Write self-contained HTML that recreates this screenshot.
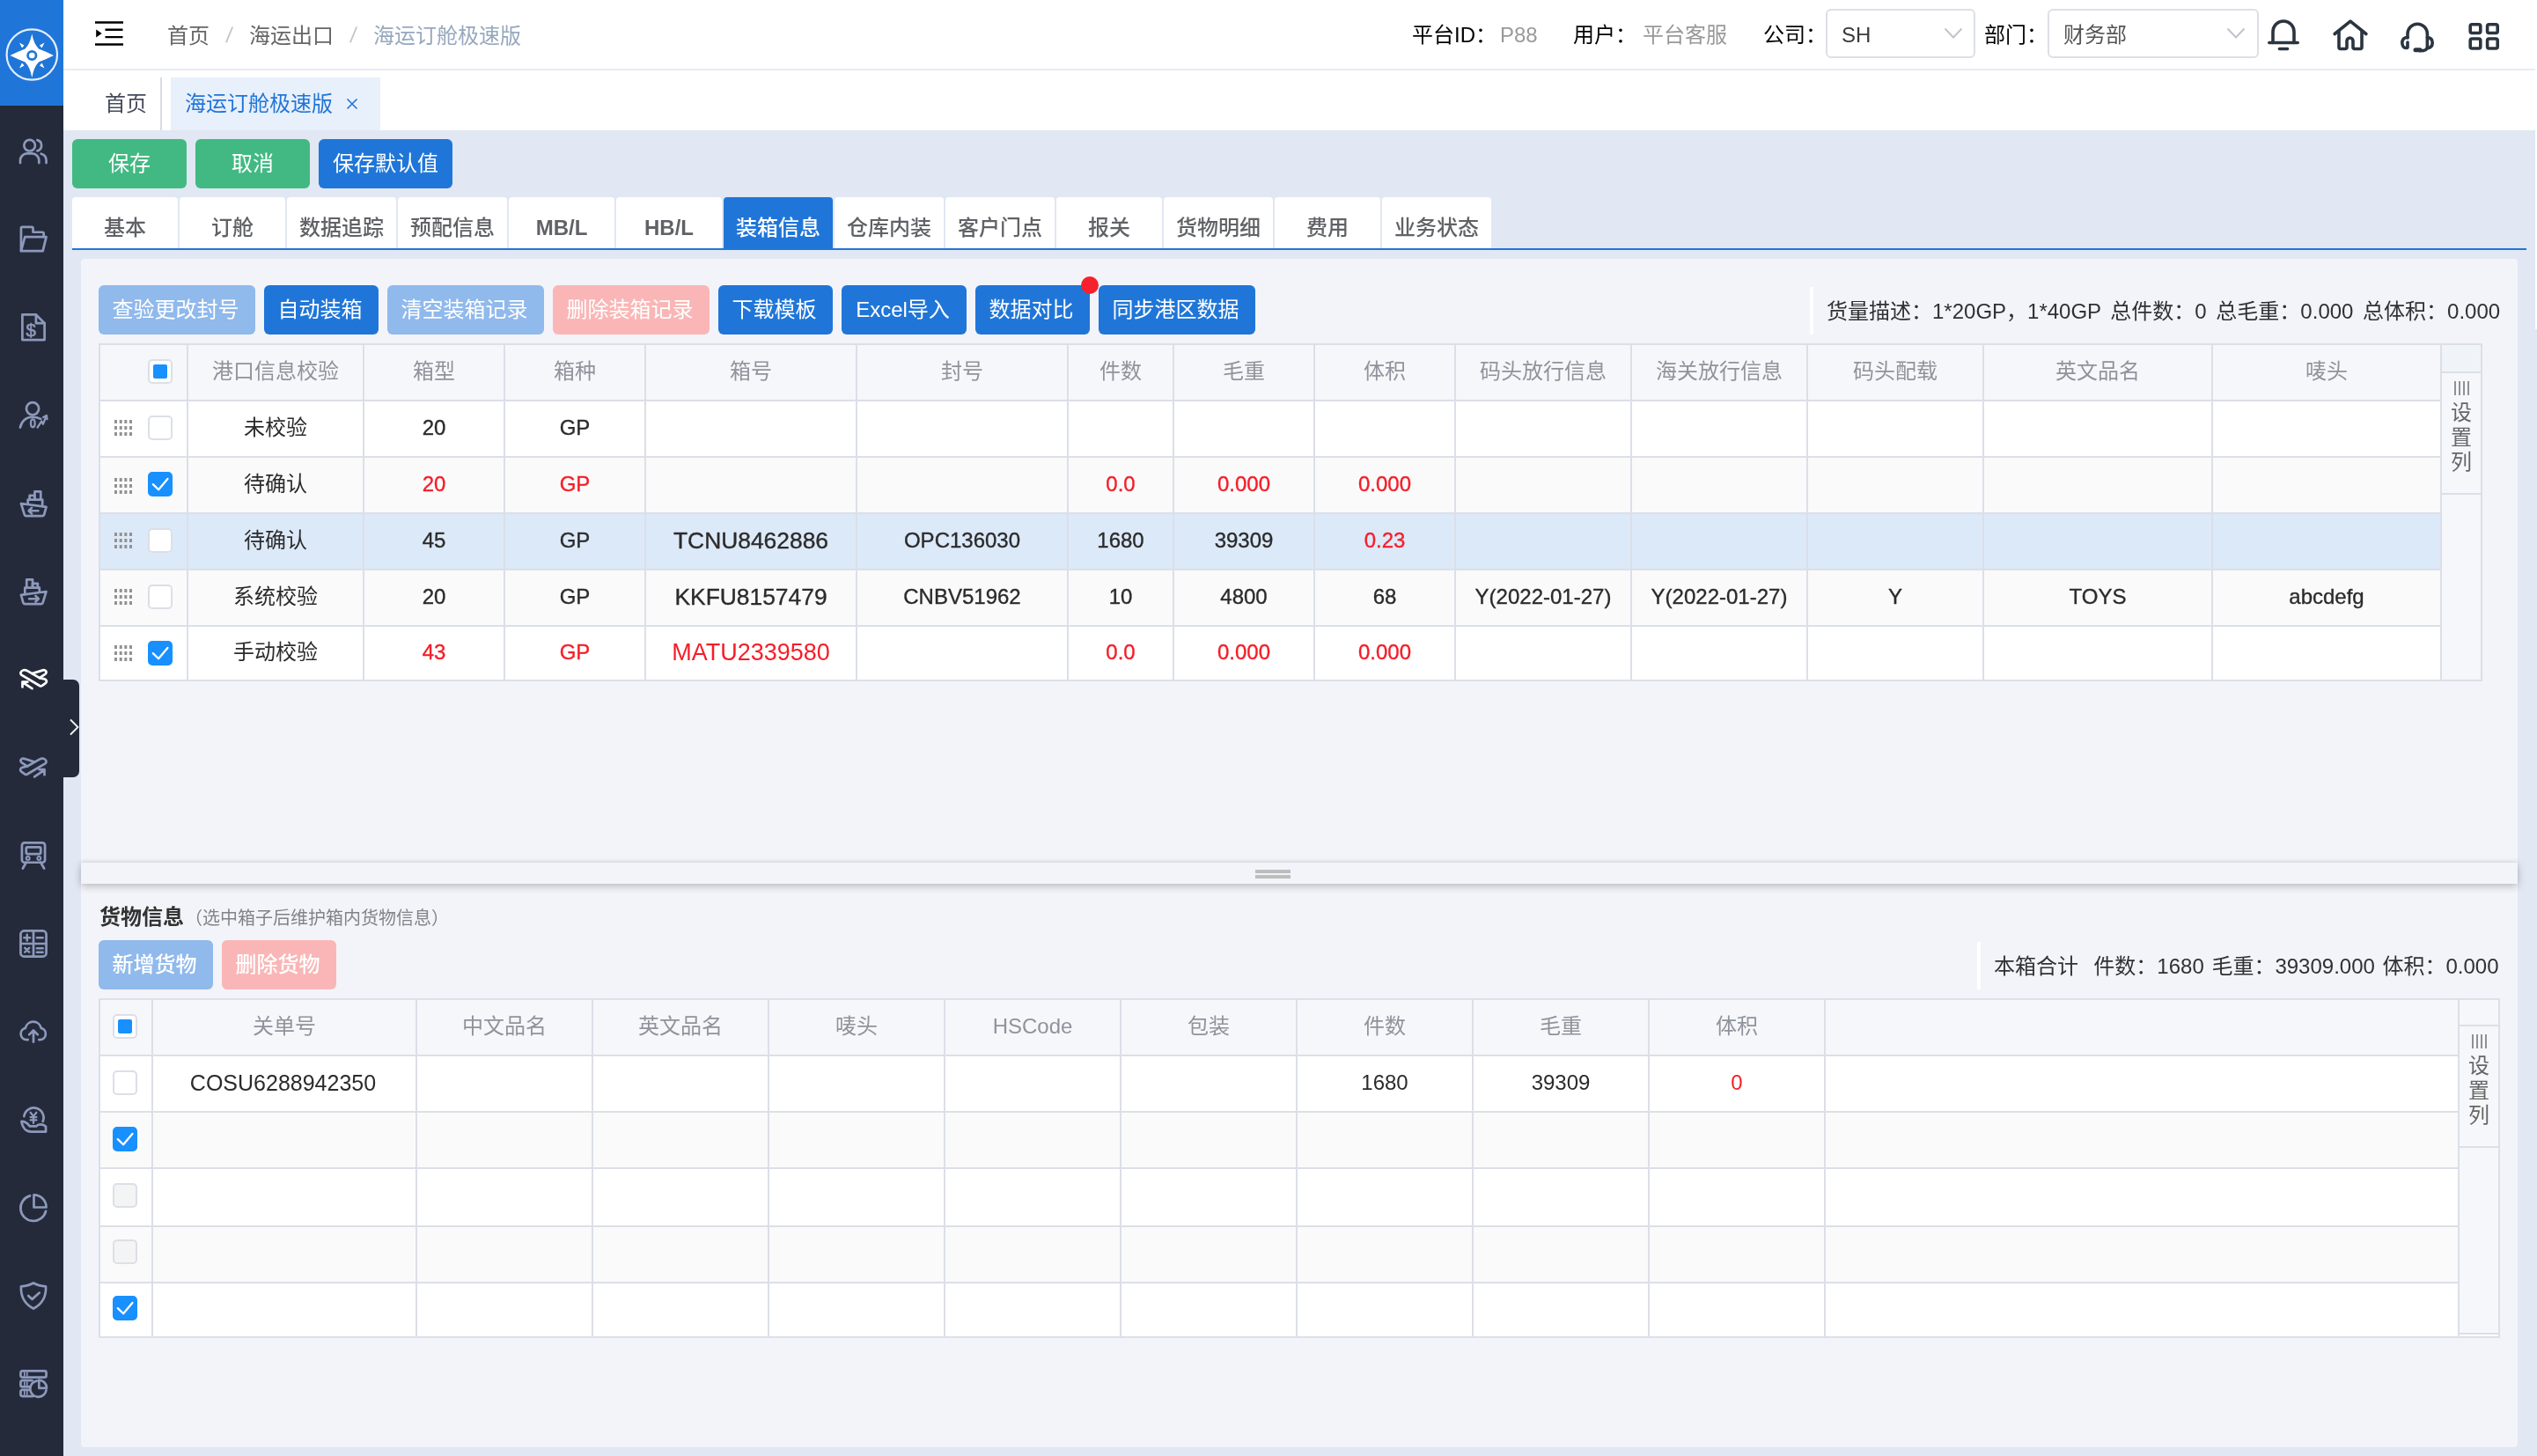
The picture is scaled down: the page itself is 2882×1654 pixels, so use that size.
<!DOCTYPE html><html lang="zh-CN"><head><meta charset="utf-8"><title>海运订舱极速版</title><style>
*{box-sizing:border-box;margin:0;padding:0}
html,body{width:2882px;height:1654px;overflow:hidden;background:#e1e7f3}
body{position:relative;will-change:transform;font-family:"Liberation Sans", "Noto Sans CJK SC", sans-serif;font-size:24px;color:#303133;-webkit-font-smoothing:antialiased}
.abs{position:absolute}
#side{left:0;top:0;width:72px;height:1654px;background:#252a3a}
#logo{left:0;top:0;width:72px;height:120px;background:#2076d8}
#side svg{position:absolute;left:22px;width:32px;height:32px;fill:none;stroke:#8c99bb;stroke-width:2.8;stroke-linecap:round;stroke-linejoin:round;overflow:visible}
#side svg.on{stroke:#fff}
#expand{left:72px;top:772px;width:18px;height:111px;background:#252a3a;border-radius:0 7px 7px 0}
#top{left:72px;top:0;width:2808px;height:80px;background:#fff;border-bottom:2px solid #e8ebf3}
#rstrip{left:2880px;top:0;width:2px;height:374px;background:#fff}
#tabs{left:72px;top:80px;width:2808px;height:68px;background:#fff}
.t{position:absolute;white-space:nowrap;line-height:1}
.sel{position:absolute;top:10px;height:56px;border:2px solid #dcdfe6;border-radius:6px;background:#fff}
.btn{position:absolute;height:56px;border-radius:6px;color:#fff;font-size:24px;line-height:56px;text-align:center;white-space:nowrap;font-weight:400}
.g{background:#42b983}.b{background:#2076d8}.bd{background:#90b9ec}.rd{background:#fab6b6}
.tab{position:absolute;top:224px;height:58px;background:#fff;border-radius:4px 4px 0 0;color:#606266;font-size:24px;line-height:58px;text-align:center;white-space:nowrap;padding-top:6px;font-weight:500}
.tab.on{background:#2076d8;color:#fff}
#line{left:82px;top:282px;width:2788px;height:2px;background:#2076d8}
#panel{left:92px;top:294px;width:2768px;height:1350px;background:#f2f4f9;border-radius:4px}
#split{left:92px;top:980px;width:2768px;height:24px;background:#f3f4f9;box-shadow:0 3px 10px rgba(0,0,0,.22),0 -1px 5px rgba(0,0,0,.08)}
.hl{position:absolute;left:1426px;width:40px;height:4px;background:#bdbdbd}
table{position:absolute;border-collapse:collapse;table-layout:fixed;font-size:24px}
tr{height:64px}
td,th{border:2px solid #dcdfe8;text-align:center;vertical-align:middle;padding:0;font-weight:400;white-space:nowrap;overflow:hidden;position:relative}
th{background:#f6f7fb;color:#8f939b;padding-bottom:8px}
th.l,td.l{padding-bottom:2px}
.t1 td.l{-webkit-text-stroke:.35px currentColor}
td.c{padding-bottom:8px}
td{background:#fff;color:#2b2b2b}
tr.s td{background:#fafafa}
tr.h td{background:#dce9f8}
.r{color:#f51d28}
.cb{position:absolute;width:28px;height:28px;border:2px solid #dcdfe6;border-radius:5px;background:#fff}
.cb.dis{background:#f4f4f5;border-color:#dcdfe6}
.cb.ck{background:#1890ff;border-color:#1890ff}
.cb.ind i{position:absolute;left:4px;top:4px;width:16px;height:16px;background:#1890ff;border-radius:2px}
.cb svg{position:absolute;left:-2px;top:-2px;width:28px;height:28px}
.dr{position:absolute;left:16px;top:21px;width:22px;height:18px}
.strip{position:absolute;background:#f5f7fb;border:2px solid #dcdfe8}
.strip .hd{position:absolute;left:0;top:0;right:0;background:#f0f3f8;border-bottom:2px solid #dcdfe8}
.strip .bt{position:absolute;left:0;right:0;height:138px;border-bottom:2px solid #dcdfe8;color:#666;font-size:24px;line-height:28px;text-align:center}
.sum{position:absolute;height:54px;border-left:4px solid #fff;line-height:54px;font-size:24px;color:#303133;white-space:nowrap;padding-left:15px}
</style></head><body>
<div id="side" class="abs">
<div id="logo" class="abs"><svg viewBox="0 0 72 120" style="left:0;top:0;width:72px;height:120px;stroke:none"><circle cx="36.3" cy="62" r="28.7" fill="none" stroke="#fff" stroke-width="2.200" stroke-opacity=".88"/><path d="M36.300 38.500 Q38.500 50 44 55.500 Q52 58.500 61 63 Q52 67.500 44 70.500 Q38.500 76 36.300 88 Q34 76 28.500 70.500 Q20.500 67.500 11.500 63 Q20.500 58.500 28.500 55.500 Q34 50 36.300 38.500 Z" fill="#fff"/><path d="M22 48.500 L27.500 51.500 L25 54.500 Z M50.500 48.500 L45 51.500 L47.500 54.500 Z M22 77.500 L27.500 74.500 L25 71.500 Z M50.500 77.500 L45 74.500 L47.500 71.500 Z" fill="#fff"/><circle cx="36.300" cy="63" r="4.700" fill="#fff" stroke="#2076d8" stroke-width="2.800"/></svg></div>
<svg viewBox="0 0 33 33" style="top:156px"><circle cx="12" cy="9.500" r="6.500"/><path d="M1 30v-3a8 8 0 0 1 8-8h6a8 8 0 0 1 8 8v3"/><path d="M21 3.200a6.500 6.500 0 0 1 0 12.600"/><path d="M25.500 19.300a8 8 0 0 1 6 7.700v3"/></svg>
<svg viewBox="0 0 33 33" style="top:256px"><path d="M2 30V3.5a1.5 1.5 0 0 1 1.5-1.5H14.5a1.5 1.5 0 0 1 1.5 1.5V8H27a1.5 1.5 0 0 1 1.5 1.500V13.500"/><path d="M2 30l4.500-16.500H31.500L27.500 30Z"/></svg>
<svg viewBox="0 0 33 33" style="top:356px"><path d="M3.5 1.500H19.500L29.500 11.500V31H3.500Z"/><path d="M19.500 1.500V11.500H29.500"/><text x="13.500" y="26.300" font-size="21" font-weight="400" text-anchor="middle" fill="#8c99bb" stroke="#8c99bb" stroke-width=".7" font-family="Liberation Sans,sans-serif">$</text></svg>
<svg viewBox="0 0 33 33" style="top:456px"><circle cx="15.500" cy="8.500" r="7.300"/><path d="M1 30.500C2.500 23 8 18.500 14.500 18.300C18 18.200 22 19 25 20.500"/><ellipse cx="15.800" cy="25.600" rx="2.400" ry="4.600" stroke-width="2.400"/><path d="M21.200 30.500L25.900 23.300L27.700 26.500L31.500 17.500" stroke-width="2.400"/><path d="M28 18.500L31.800 16.500L32.500 20.800" stroke-width="2.400"/></svg>
<svg viewBox="0 0 33 33" style="top:556px"><path d="M2 16.500L31.500 20.500L29 29.500a2 2 0 0 1-2 1.500H8a2 2 0 0 1-2-1.500Z"/><path d="M10 17V12H27V19.500"/><path d="M12 12V7h6v5"/><path d="M18 12V2.500h7V12"/><path d="M22 25H11m3.500-3.500L11 25l3.500 3.500"/></svg>
<svg viewBox="0 0 33 33" style="top:656px"><path d="M31.500 16.500L2 20.500L4.500 29.500a2 2 0 0 0 2 1.500H25.500a2 2 0 0 0 2-1.500Z"/><path d="M23.500 17V12H6.500V19.500"/><path d="M21.500 12V7h-6v5"/><path d="M15.500 12V2.500h-7V12"/><path d="M11.500 25H22.500m-3.500-3.500L22.500 25l-3.500 3.500"/></svg>
<svg class="on" viewBox="0 0 33 33" style="top:756px"><path d="M2.300 10.900C.600 9.200 1.800 6.200 4.800 5.400C6.500 5 8 5.500 9.500 6.400L23.700 14.500L29.500 15.800C32.200 16.500 32.600 19.200 30.600 20.700L26.700 23.600C25.800 24.300 24.800 24.300 23.800 23.700Z"/><path d="M15 9.400L27.500 5.500C30.700 4.700 32.700 7.700 30.500 9.900L23.700 14.500"/><path d="M14.900 27L3.800 19.600M3.600 25.200V19.300H9.600"/></svg>
<svg viewBox="0 0 33 33" style="top:856px"><path d="M30.700 11.400C32.400 9.700 31.200 6.700 28.200 5.900C26.500 5.500 25 6 23.500 6.900L9.300 15L3.500 16.300C.800 17 .400 19.700 2.400 21.200L6.300 24.100C7.200 24.800 8.200 24.800 9.200 24.200Z"/><path d="M18 9.900L5.500 6C2.300 5.200 .300 8.200 2.500 10.400L9.300 15"/><path d="M17.700 27.200L29 19.400M23.300 18.800H29.400V24.900"/></svg>
<svg viewBox="0 0 33 33" style="top:956px"><rect x="3" y="1.500" width="27" height="23" rx="3"/><rect x="8" y="6.500" width="17" height="8" rx="1.500"/><circle cx="10" cy="19.500" r="2" stroke-width="2"/><circle cx="23" cy="19.500" r="2" stroke-width="2"/><path d="M8 24.500L4 31.500M25 24.500L29 31.500"/></svg>
<svg viewBox="0 0 33 33" style="top:1056px"><rect x="1.500" y="1.500" width="30" height="30" rx="4"/><path d="M16.500 1.500V31.500M1.500 16.500H31.500"/><path d="M5.500 9.500h7M9 6v7M20.500 9.500h7M6.500 21.500l5 5M11.500 21.500l-5 5M20.500 22h7M20.500 26.500h7" stroke-width="2.600"/></svg>
<svg viewBox="0 0 33 33" style="top:1156px"><path d="M10 26h-1.500a7 7 0 0 1-1.500-13.800a9.500 9.500 0 0 1 18.500 0a7 7 0 0 1-1.500 13.800H23"/><path d="M16.500 28.500V15.500M11.500 20l5-5l5 5"/></svg>
<svg viewBox="0 0 33 33" style="top:1256px"><path d="M5.500 12.500a11.500 11.500 0 1 1 22 6"/><path d="M13 8l3.500 4.500L20 8M16.500 12.500V20.500M13 13.500h7M13 17h7" stroke-width="2.300"/><path d="M2.500 18.500c4 0 7 2 9.500 5.500h8c2-3 8-2.500 11 .5v6H14c-6 0-10.500-4.500-11.500-12Z"/></svg>
<svg viewBox="0 0 33 33" style="top:1356px"><path d="M12.500 2.500A15 15 0 1 0 31 20.500"/><path d="M17 1.500V16H31.500A14.500 14.500 0 0 0 17 1.500Z"/></svg>
<svg viewBox="0 0 33 33" style="top:1456px"><path d="M16.500 1.500c4.500 2.500 9 3.500 14.500 4c.5 11-3 20-14.500 26C5 25.500 1.500 16.500 2 5.500c5.500-.5 10-1.500 14.500-4Z"/><path d="M10.500 16.500l4.500 4l8.500-7.500"/></svg>
<svg viewBox="0 0 33 33" style="top:1556px"><rect x="1.500" y="1.500" width="30" height="7.500" rx="2"/><path d="M15 12.500H3.500a2 2 0 0 0-2 2v3.500a2 2 0 0 0 2 2H12"/><path d="M12 23.500H3.500a2 2 0 0 0-2 2V29a2 2 0 0 0 2 2H16"/><path d="M6 3.500v3.500M9 3.500v3.500M6 14.500v3.500M9 14.500v3.500M6 25.500v3.500M9 25.500v3.500" stroke-width="1.800"/><path d="M20.500 13A9.500 9.500 0 1 0 31.500 24"/><path d="M23 12v9.500h9A9.500 9.500 0 0 0 23 12Z"/></svg>
</div>
<div id="expand" class="abs"><svg viewBox="0 0 18 111" style="position:absolute;left:0;top:0;width:18px;height:111px;fill:none;stroke:#fff;stroke-width:1.800"><path d="M8 45.500l8.500 8.500l-8.500 8.500"/></svg></div>
<div id="top" class="abs"></div><div id="rstrip" class="abs"></div><div id="tabs" class="abs"></div>
<svg class="abs" viewBox="0 0 32 28" style="left:108px;top:24px;width:32px;height:28px"><path d="M0 1.500h32M11.500 9.700H31.500M11.500 18.100H31.500M0 26.500H32" stroke="#000" stroke-width="2.400" fill="none"/><path d="M1.200 9.500l6.500 4.500l-6.500 4.500Z" fill="#000"/></svg>
<div class="t" style="left:190px;top:29px;font-size:24px;color:#666;">首页</div>
<div class="t" style="left:257px;top:28px;font-size:24px;color:#c0c4cc;transform:skewX(-8deg)">/</div>
<div class="t" style="left:283px;top:29px;font-size:24px;color:#666;">海运出口</div>
<div class="t" style="left:398px;top:28px;font-size:24px;color:#c0c4cc;transform:skewX(-8deg)">/</div>
<div class="t" style="left:424px;top:29px;font-size:24px;color:#97a8be;">海运订舱极速版</div>
<div class="t" style="left:1604px;top:28px;font-size:24px;color:#000;">平台ID：</div>
<div class="t" style="left:1704px;top:28px;font-size:24px;color:#999;">P88</div>
<div class="t" style="left:1787px;top:28px;font-size:24px;color:#000;">用户：</div>
<div class="t" style="left:1866px;top:28px;font-size:24px;color:#999;">平台客服</div>
<div class="t" style="left:2003px;top:28px;font-size:24px;color:#000;">公司：</div>
<div class="sel" style="left:2074px;width:170px"></div>
<div class="t" style="left:2092px;top:28px;font-size:24px;color:#3a3a3a;">SH</div>
<div class="t" style="left:2254px;top:28px;font-size:24px;color:#000;">部门：</div>
<div class="sel" style="left:2326px;width:240px"></div>
<div class="t" style="left:2344px;top:28px;font-size:24px;color:#555;">财务部</div>
<svg class="abs" viewBox="0 0 22 14" style="left:2208px;top:31px;width:22px;height:14px"><path d="M1.500 1.500L11 11.500L20.500 1.500" fill="none" stroke="#c0c4cc" stroke-width="2"/></svg>
<svg class="abs" viewBox="0 0 22 14" style="left:2529px;top:31px;width:22px;height:14px"><path d="M1.500 1.500L11 11.500L20.500 1.500" fill="none" stroke="#c0c4cc" stroke-width="2"/></svg>
<svg class="abs" viewBox="0 0 36 36" style="left:2576px;top:22px;width:36px;height:36px"><g fill="none" stroke="#2b3540" stroke-width="3.600" stroke-linecap="round" stroke-linejoin="round"><path d="M1.800 26.500H34.200"/><path d="M6 26.500V14a12 12 0 0 1 24 0V26.500"/><path d="M13.500 33.500h9"/></g></svg>
<svg class="abs" viewBox="0 0 40 36" style="left:2650px;top:22px;width:40px;height:36px"><g fill="none" stroke="#2b3540" stroke-width="3.600" stroke-linecap="round" stroke-linejoin="round"><path d="M2.200 16.500L20 2.200L37.800 16.500"/><path d="M7 13.500V31.500a2 2 0 0 0 2 2H14a2 2 0 0 0 2-2V24.500a3.500 3.500 0 0 1 7 0V31.500a2 2 0 0 0 2 2H31a2 2 0 0 0 2-2V13.500"/></g></svg>
<svg class="abs" viewBox="0 0 38 36" style="left:2727px;top:24px;width:38px;height:36px"><g fill="none" stroke="#2b3540" stroke-width="3.600" stroke-linecap="round" stroke-linejoin="round"><path d="M8 19V14.500a11.200 11.200 0 0 1 22.400 0V29.500C30.400 32.800 27 33.800 22 33.800"/><path d="M8 18.500C3 18.500 1.800 22 1.800 24.500C1.800 28 3.500 30.500 6.500 30.500L8 30V24"/><path d="M30.400 18.500C35 19 36.200 22 36.200 24.500C36.200 28 34.500 30.300 30.400 30.800"/><path d="M17 32.800H22" stroke-width="5"/></g></svg>
<svg class="abs" viewBox="0 0 36 33" style="left:2804px;top:25px;width:36px;height:33px"><g fill="none" stroke="#2b3540" stroke-width="3.600" stroke-linecap="round" stroke-linejoin="round" stroke-width="3.400"><rect x="2.200" y="2.700" width="11.600" height="9.800" rx="2"/><rect x="21.600" y="2.700" width="11.600" height="9.800" rx="2"/><rect x="2.200" y="19" width="11.600" height="11" rx="2"/><rect x="21.600" y="19" width="11.600" height="11" rx="2"/></g></svg>
<div class="t" style="left:119px;top:106px;font-size:24px;color:#454b5c;">首页</div>
<div class="abs" style="left:182px;top:88px;width:2px;height:60px;background:#d8dce6"></div>
<div class="abs" style="left:194px;top:88px;width:238px;height:60px;background:#e8f0fb"></div>
<div class="t" style="left:210px;top:106px;font-size:24px;color:#2076d8;">海运订舱极速版</div>
<svg class="abs" viewBox="0 0 14 14" style="left:393px;top:111px;width:14px;height:14px"><path d="M1.500 1.500l11 11M12.500 1.500l-11 11" stroke="#2076d8" stroke-width="1.600" fill="none"/></svg>
<div class="btn g" style="left:82px;top:158px;width:130px">保存</div>
<div class="btn g" style="left:222px;top:158px;width:130px">取消</div>
<div class="btn b" style="left:362px;top:158px;width:152px">保存默认值</div>
<div class="tab" style="left:82px;width:120px">基本</div>
<div class="tab" style="left:204px;width:120px">订舱</div>
<div class="tab" style="left:326px;width:124px">数据追踪</div>
<div class="tab" style="left:452px;width:124px">预配信息</div>
<div class="tab" style="left:578px;width:120px;font-weight:700">MB/L</div>
<div class="tab" style="left:700px;width:120px;font-weight:700">HB/L</div>
<div class="tab on" style="left:822px;width:124px">装箱信息</div>
<div class="tab" style="left:948px;width:124px">仓库内装</div>
<div class="tab" style="left:1074px;width:124px">客户门点</div>
<div class="tab" style="left:1200px;width:120px">报关</div>
<div class="tab" style="left:1322px;width:124px">货物明细</div>
<div class="tab" style="left:1448px;width:120px">费用</div>
<div class="tab" style="left:1570px;width:124px">业务状态</div>
<div id="line" class="abs"></div>
<div id="panel" class="abs"></div>
<div class="btn bd" style="left:112px;top:324px;width:178px;padding-right:3px">查验更改封号</div>
<div class="btn b" style="left:300px;top:324px;width:130px;padding-right:3px">自动装箱</div>
<div class="btn bd" style="left:440px;top:324px;width:178px;padding-right:3px">清空装箱记录</div>
<div class="btn rd" style="left:628px;top:324px;width:178px;padding-right:3px">删除装箱记录</div>
<div class="btn b" style="left:816px;top:324px;width:130px;padding-right:3px">下载模板</div>
<div class="btn b" style="left:956px;top:324px;width:142px;padding-right:3px">Excel导入</div>
<div class="btn b" style="left:1108px;top:324px;width:130px;padding-right:3px">数据对比</div>
<div class="btn b" style="left:1248px;top:324px;width:178px;padding-right:3px">同步港区数据</div>
<div class="abs" style="left:1228px;top:314px;width:20px;height:20px;border-radius:50%;background:#f5222d"></div>
<div class="sum" id="sum1" style="left:2056px;top:326px;width:784px;word-spacing:4px;line-height:56px">货量描述：1*20GP，1*40GP 总件数：0 总毛重：0.000 总体积：0.000</div>
<table class="t1" style="left:112px;top:390px;width:2662px"><colgroup><col style="width:100px"><col style="width:200px"><col style="width:160px"><col style="width:160px"><col style="width:240px"><col style="width:240px"><col style="width:120px"><col style="width:160px"><col style="width:160px"><col style="width:200px"><col style="width:200px"><col style="width:200px"><col style="width:260px"><col style="width:260px"></colgroup>
<tr><th><span class="cb ind" style="left:54px;top:16px"><i></i></span></th><th>港口信息校验</th><th>箱型</th><th>箱种</th><th>箱号</th><th>封号</th><th>件数</th><th>毛重</th><th>体积</th><th>码头放行信息</th><th>海关放行信息</th><th>码头配载</th><th>英文品名</th><th>唛头</th></tr>
<tr><td><svg class="dr" viewBox="0 0 22 18"><rect x="0" y="0" width="3" height="4" fill="#929292"/><rect x="0" y="7" width="3" height="4" fill="#929292"/><rect x="0" y="14" width="3" height="4" fill="#929292"/><rect x="5.7" y="0" width="3" height="4" fill="#929292"/><rect x="5.7" y="7" width="3" height="4" fill="#929292"/><rect x="5.7" y="14" width="3" height="4" fill="#929292"/><rect x="11.3" y="0" width="3" height="4" fill="#929292"/><rect x="11.3" y="7" width="3" height="4" fill="#929292"/><rect x="11.3" y="14" width="3" height="4" fill="#929292"/><rect x="17" y="0" width="3" height="4" fill="#929292"/><rect x="17" y="7" width="3" height="4" fill="#929292"/><rect x="17" y="14" width="3" height="4" fill="#929292"/></svg><span class="cb" style="left:54px;top:16px"></span></td><td class="c">未校验</td><td class="l">20</td><td class="l">GP</td><td></td><td></td><td></td><td></td><td></td><td></td><td></td><td></td><td></td><td></td></tr>
<tr class="s"><td><svg class="dr" style="top:23px" viewBox="0 0 22 18"><rect x="0" y="0" width="3" height="4" fill="#929292"/><rect x="0" y="7" width="3" height="4" fill="#929292"/><rect x="0" y="14" width="3" height="4" fill="#929292"/><rect x="5.7" y="0" width="3" height="4" fill="#929292"/><rect x="5.7" y="7" width="3" height="4" fill="#929292"/><rect x="5.7" y="14" width="3" height="4" fill="#929292"/><rect x="11.3" y="0" width="3" height="4" fill="#929292"/><rect x="11.3" y="7" width="3" height="4" fill="#929292"/><rect x="11.3" y="14" width="3" height="4" fill="#929292"/><rect x="17" y="0" width="3" height="4" fill="#929292"/><rect x="17" y="7" width="3" height="4" fill="#929292"/><rect x="17" y="14" width="3" height="4" fill="#929292"/></svg><span class="cb ck" style="left:54px;top:16px"><svg viewBox="0 0 28 28"><path d="M5.800 14.100L12.100 20.300L22.400 7.900" fill="none" stroke="#fff" stroke-width="2.300" stroke-linecap="round" stroke-linejoin="round"/></svg></span></td><td class="c">待确认</td><td class="r l">20</td><td class="r l">GP</td><td></td><td></td><td class="r l">0.0</td><td class="r l">0.000</td><td class="r l">0.000</td><td></td><td></td><td></td><td></td><td></td></tr>
<tr class="h"><td><svg class="dr" viewBox="0 0 22 18"><rect x="0" y="0" width="3" height="4" fill="#929292"/><rect x="0" y="7" width="3" height="4" fill="#929292"/><rect x="0" y="14" width="3" height="4" fill="#929292"/><rect x="5.7" y="0" width="3" height="4" fill="#929292"/><rect x="5.7" y="7" width="3" height="4" fill="#929292"/><rect x="5.7" y="14" width="3" height="4" fill="#929292"/><rect x="11.3" y="0" width="3" height="4" fill="#929292"/><rect x="11.3" y="7" width="3" height="4" fill="#929292"/><rect x="11.3" y="14" width="3" height="4" fill="#929292"/><rect x="17" y="0" width="3" height="4" fill="#929292"/><rect x="17" y="7" width="3" height="4" fill="#929292"/><rect x="17" y="14" width="3" height="4" fill="#929292"/></svg><span class="cb" style="left:54px;top:16px"></span></td><td class="c">待确认</td><td class="l">45</td><td class="l">GP</td><td class="l" style="font-size:26.4px">TCNU8462886</td><td class="l">OPC136030</td><td class="l">1680</td><td class="l">39309</td><td class="r l">0.23</td><td></td><td></td><td></td><td></td><td></td></tr>
<tr class="s"><td><svg class="dr" viewBox="0 0 22 18"><rect x="0" y="0" width="3" height="4" fill="#929292"/><rect x="0" y="7" width="3" height="4" fill="#929292"/><rect x="0" y="14" width="3" height="4" fill="#929292"/><rect x="5.7" y="0" width="3" height="4" fill="#929292"/><rect x="5.7" y="7" width="3" height="4" fill="#929292"/><rect x="5.7" y="14" width="3" height="4" fill="#929292"/><rect x="11.3" y="0" width="3" height="4" fill="#929292"/><rect x="11.3" y="7" width="3" height="4" fill="#929292"/><rect x="11.3" y="14" width="3" height="4" fill="#929292"/><rect x="17" y="0" width="3" height="4" fill="#929292"/><rect x="17" y="7" width="3" height="4" fill="#929292"/><rect x="17" y="14" width="3" height="4" fill="#929292"/></svg><span class="cb" style="left:54px;top:16px"></span></td><td class="c">系统校验</td><td class="l">20</td><td class="l">GP</td><td class="l" style="font-size:26.4px">KKFU8157479</td><td class="l">CNBV51962</td><td class="l">10</td><td class="l">4800</td><td class="l">68</td><td class="l">Y(2022-01-27)</td><td class="l">Y(2022-01-27)</td><td class="l">Y</td><td class="l">TOYS</td><td class="l">abcdefg</td></tr>
<tr style="height:62px"><td><svg class="dr" viewBox="0 0 22 18"><rect x="0" y="0" width="3" height="4" fill="#929292"/><rect x="0" y="7" width="3" height="4" fill="#929292"/><rect x="0" y="14" width="3" height="4" fill="#929292"/><rect x="5.7" y="0" width="3" height="4" fill="#929292"/><rect x="5.7" y="7" width="3" height="4" fill="#929292"/><rect x="5.7" y="14" width="3" height="4" fill="#929292"/><rect x="11.3" y="0" width="3" height="4" fill="#929292"/><rect x="11.3" y="7" width="3" height="4" fill="#929292"/><rect x="11.3" y="14" width="3" height="4" fill="#929292"/><rect x="17" y="0" width="3" height="4" fill="#929292"/><rect x="17" y="7" width="3" height="4" fill="#929292"/><rect x="17" y="14" width="3" height="4" fill="#929292"/></svg><span class="cb ck" style="left:54px;top:16px"><svg viewBox="0 0 28 28"><path d="M5.800 14.100L12.100 20.300L22.400 7.900" fill="none" stroke="#fff" stroke-width="2.300" stroke-linecap="round" stroke-linejoin="round"/></svg></span></td><td class="c">手动校验</td><td class="r l">43</td><td class="r l">GP</td><td class="r l" style="font-size:27px;-webkit-text-stroke:0">MATU2339580</td><td></td><td class="r l">0.0</td><td class="r l">0.000</td><td class="r l">0.000</td><td></td><td></td><td></td><td></td><td></td></tr>
</table>
<div class="strip" style="left:2772px;top:390px;width:48px;height:384px"><div class="hd" style="height:32px"></div><div class="bt" style="top:32px"><svg viewBox="0 0 18 16" style="display:block;margin:9px auto 6px;width:18px;height:16px"><path d="M2 0v16M7 0v16M12 0v16M17 0v16" stroke="#777" stroke-width="1.600"/></svg>设<br>置<br>列</div></div>
<div id="split" class="abs"></div><div class="hl" style="top:988px"></div><div class="hl" style="top:994px"></div>
<div class="t" style="left:113px;top:1030px;font-size:24px;color:#333;font-weight:700">货物信息</div>
<div class="t" style="left:210px;top:1033px;font-size:20px;color:#808389;">（选中箱子后维护箱内货物信息）</div>
<div class="btn bd" style="left:112px;top:1068px;width:130px;font-weight:500;padding-right:3px">新增货物</div>
<div class="btn rd" style="left:252px;top:1068px;width:130px;font-weight:500;padding-right:3px">删除货物</div>
<div class="sum" id="sum2" style="left:2246px;top:1070px;width:594px;word-spacing:2px;line-height:56px">本箱合计&nbsp; 件数：1680 毛重：39309.000 体积：0.000</div>
<table class="t2" style="left:112px;top:1134px;width:2682px"><colgroup><col style="width:60px"><col style="width:300px"><col style="width:200px"><col style="width:200px"><col style="width:200px"><col style="width:200px"><col style="width:200px"><col style="width:200px"><col style="width:200px"><col style="width:200px"><col style="width:720px"></colgroup>
<tr><th><span class="cb ind" style="left:14px;top:16px"><i></i></span></th><th>关单号</th><th>中文品名</th><th>英文品名</th><th>唛头</th><th class="l">HSCode</th><th>包装</th><th>件数</th><th>毛重</th><th>体积</th><th></th></tr>
<tr><td><span class="cb" style="left:14px;top:16px"></span></td><td class="l" style="font-size:25px;padding-right:3px">COSU6288942350</td><td></td><td></td><td></td><td></td><td></td><td class="l">1680</td><td class="l">39309</td><td class="r l">0</td><td></td></tr>
<tr class="s"><td><span class="cb ck" style="left:14px;top:16px"><svg viewBox="0 0 28 28"><path d="M5.800 14.100L12.100 20.300L22.400 7.900" fill="none" stroke="#fff" stroke-width="2.300" stroke-linecap="round" stroke-linejoin="round"/></svg></span></td><td></td><td></td><td></td><td></td><td></td><td></td><td></td><td></td><td></td><td></td></tr>
<tr style="height:66px"><td><span class="cb dis" style="left:14px;top:16px"></span></td><td></td><td></td><td></td><td></td><td></td><td></td><td></td><td></td><td></td><td></td></tr>
<tr class="s"><td><span class="cb dis" style="left:14px;top:14px"></span></td><td></td><td></td><td></td><td></td><td></td><td></td><td></td><td></td><td></td><td></td></tr>
<tr style="height:62px"><td><span class="cb ck" style="left:14px;top:14px"><svg viewBox="0 0 28 28"><path d="M5.800 14.100L12.100 20.300L22.400 7.900" fill="none" stroke="#fff" stroke-width="2.300" stroke-linecap="round" stroke-linejoin="round"/></svg></span></td><td></td><td></td><td></td><td></td><td></td><td></td><td></td><td></td><td></td><td></td></tr>
</table>
<div class="strip" style="left:2792px;top:1134px;width:48px;height:386px"><div class="hd" style="height:30px;background:#f5f7fb"></div><div class="bt" style="top:30px"><svg viewBox="0 0 18 16" style="display:block;margin:9px auto 6px;width:18px;height:16px"><path d="M2 0v16M7 0v16M12 0v16M17 0v16" stroke="#777" stroke-width="1.600"/></svg>设<br>置<br>列</div><div style="position:absolute;left:0;right:0;bottom:0;height:4px;background:#fff;border-top:2px solid #dcdfe8"></div></div>
</body></html>
